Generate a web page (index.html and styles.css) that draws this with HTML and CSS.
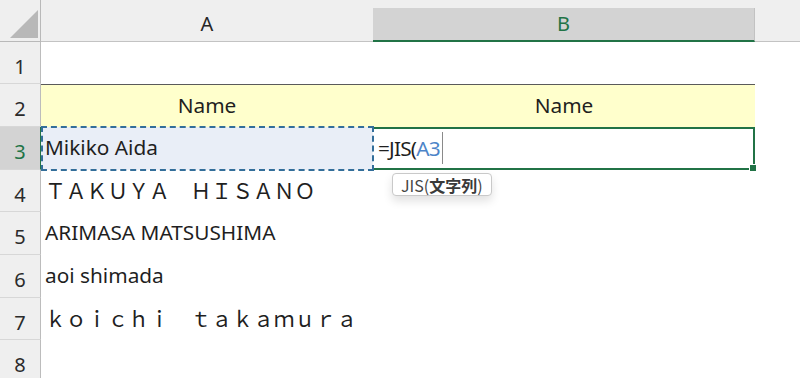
FILE: index.html
```html
<!DOCTYPE html>
<html lang="ja">
<head>
<meta charset="utf-8">
<title>JIS</title>
<link rel="stylesheet" href="styles.css">
</head>
<body>
<div class="sheet">
  <div class="corner"><svg width="41" height="41" viewBox="0 0 41 41"><polygon points="10,38 38,38 38,10" fill="#b8b8b8"/></svg></div>
  <div class="colhead"><div class="colbox">A</div></div>
  <div class="colhead"><div class="colbox sel">B</div></div>
  <div class="colhead"></div>

  <div class="rowhead">1</div>
  <div class="cell"></div>
  <div class="cell"></div>
  <div class="cell"></div>

  <div class="rowhead">2</div>
  <div class="cell title">Name</div>
  <div class="cell title">Name</div>
  <div class="cell"></div>

  <div class="rowhead sel">3</div>
  <div class="cell ref">Mikiko Aida</div>
  <div class="cell active"><span class="formula">=JIS(<span class="arg">A3</span></span><div class="tip">JIS(<b>文字列</b>)</div></div>
  <div class="cell"></div>

  <div class="rowhead">4</div>
  <div class="cell">ＴＡＫＵＹＡ　ＨＩＳＡＮＯ</div>
  <div class="cell"></div>
  <div class="cell"></div>

  <div class="rowhead">5</div>
  <div class="cell">ARIMASA MATSUSHIMA</div>
  <div class="cell"></div>
  <div class="cell"></div>

  <div class="rowhead">6</div>
  <div class="cell">aoi shimada</div>
  <div class="cell"></div>
  <div class="cell"></div>

  <div class="rowhead">7</div>
  <div class="cell">ｋｏｉｃｈｉ　ｔａｋａｍｕｒａ</div>
  <div class="cell"></div>
  <div class="cell"></div>

  <div class="rowhead">8</div>
  <div class="cell"></div>
  <div class="cell"></div>
  <div class="cell"></div>
</div>
</body>
</html>
```

FILE: styles.css
```css
* { box-sizing: border-box; }
html, body { margin: 0; padding: 0; background: #fff; }
body {
  width: 800px;
  height: 378px;
  overflow: hidden;
  font-family: "Noto Sans", "Noto Sans CJK JP", sans-serif;
  color: #222;
}
.sheet {
  display: grid;
  grid-template-columns: 41px 332px 382px 1fr;
  grid-template-rows: 42px 42px 43px 43px 42px 43px 43px 42px 43px;
}
.corner {
  background: #efefef;
  border-right: 1px solid #b9b9b9;
  border-bottom: 1px solid #b9b9b9;
}
.corner svg { display: block; }
.colhead {
  background: #efefef;
  border-bottom: 1px solid #c3c3c3;
  padding-top: 8px;
  display: flex;
}
.colbox {
  flex: 1;
  display: flex;
  align-items: center;
  justify-content: center;
  font-size: 20px;
  color: #262626;
  padding-bottom: 2px;
}
.colbox.sel {
  background: #d3d3d3;
  color: #217346;
  border-bottom: 2px solid #217346;
  margin-bottom: -1px;
  border-right: 1px solid #c2c2c2;
}
.rowhead {
  background: #efefef;
  border-right: 1px solid #bcbcbc;
  border-bottom: 1px solid #d7d7d7;
  display: flex;
  align-items: center;
  justify-content: center;
  padding-top: 7px;
  font-size: 20px;
  color: #2b2b2b;
}
.rowhead.sel {
  background: #d3d3d3;
  color: #217346;
  border-right: 1px solid #217346;
}
.cell {
  display: flex;
  align-items: center;
  padding-left: 4px;
  padding-bottom: 3px;
  font-size: 20.8px;
  color: #1f1f1f;
  white-space: pre;
}
.title {
  background: #ffffcc;
  border-top: 1px solid #5a5a5a;
  justify-content: center;
  padding-left: 0;
}
.ref {
  background: #e9eef7;
  position: relative;
}
.ref::after {
  content: "";
  position: absolute;
  left: 0;
  top: -1px;
  right: -1px;
  bottom: -1px;
  border: 2px dashed #336e9a;
  z-index: 3;
}
.active {
  position: relative;
  border: 2px solid #217346;
  border-left: none;
  padding-left: 5px;
  padding-bottom: 1px;
}
.active::after {
  content: "";
  position: absolute;
  right: -4px;
  bottom: -4px;
  width: 6px;
  height: 6px;
  background: #217346;
  border: 1px solid #fff;
}
.formula {
  display: inline-block;
  line-height: 32px;
  letter-spacing: -0.8px;
}
.arg {
  display: inline-block;
  color: #4c84c8;
  padding-right: 2px;
  border-right: 1px solid #8a8a8a;
}
.tip {
  position: absolute;
  left: 19px;
  top: 44px;
  height: 23px;
  padding: 0 8px;
  display: flex;
  align-items: center;
  background: #fff;
  border: 1px solid #c9c9c9;
  border-radius: 4px;
  box-shadow: 0 5px 10px rgba(0, 0, 0, 0.12);
  font-family: "Noto Sans CJK JP", sans-serif;
  font-size: 16px;
  color: #444;
  z-index: 4;
}
.tip b { font-weight: 700; color: #3a3a3a; }
```
